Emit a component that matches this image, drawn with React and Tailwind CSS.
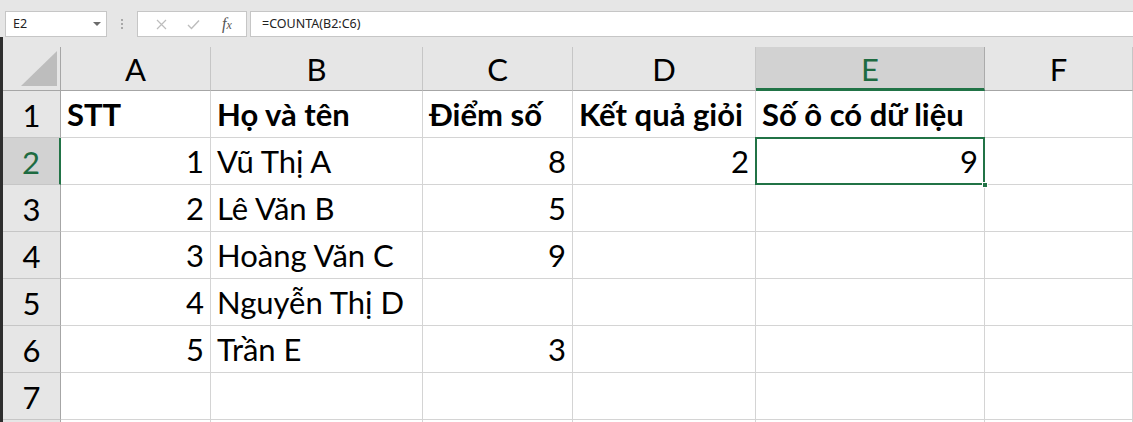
import React from "react";

const COLS = ["A", "B", "C", "D", "E", "F"];

const ROWS = [
  { n: 1, cells: [{ t: "STT", b: true }, { t: "Họ và tên", b: true }, { t: "Điểm số", b: true }, { t: "Kết quả giỏi", b: true }, { t: "Số ô có dữ liệu", b: true }, null] },
  { n: 2, cells: [{ t: "1", r: true }, { t: "Vũ Thị A" }, { t: "8", r: true }, { t: "2", r: true }, { t: "9", r: true }, null] },
  { n: 3, cells: [{ t: "2", r: true }, { t: "Lê Văn B" }, { t: "5", r: true }, null, null, null] },
  { n: 4, cells: [{ t: "3", r: true }, { t: "Hoàng Văn C" }, { t: "9", r: true }, null, null, null] },
  { n: 5, cells: [{ t: "4", r: true }, { t: "Nguyễn Thị D" }, null, null, null, null] },
  { n: 6, cells: [{ t: "5", r: true }, { t: "Trần E" }, { t: "3", r: true }, null, null, null] },
  { n: 7, cells: [null, null, null, null, null, null] },
  { n: 8, cells: [null, null, null, null, null, null] },
];

function FormulaBar() {
  return (
    <div className="h-[37px] flex items-start pt-[11px] font-['Noto_Sans',sans-serif] text-[12.5px] text-[#222]">
      {/* name box */}
      <div className="ml-[5px] w-[102px] h-[26px] bg-white border border-[#c6c6c6] flex items-center pl-[7px] pr-[5px]">
        <span className="flex-1">E2</span>
        <svg width="8" height="5" viewBox="0 0 8 5">
          <path d="M0 0 L8 0 L4 4 Z" fill="#6b6b6b" />
        </svg>
      </div>
      <div className="w-[30px] h-[26px] flex flex-col items-center justify-center gap-[2px]">
        <span className="w-[2px] h-[2px] bg-[#a8a8a8]" />
        <span className="w-[2px] h-[2px] bg-[#a8a8a8]" />
        <span className="w-[2px] h-[2px] bg-[#a8a8a8]" />
      </div>
      {/* buttons */}
      <div className="w-[110px] h-[26px] bg-white border border-[#c6c6c6] flex items-center">
        <div className="w-[40px] flex justify-center pl-[6px]">
          <svg width="11" height="11" viewBox="0 0 11 11">
            <path d="M1 1 L10 10 M10 1 L1 10" stroke="#bdbdbd" strokeWidth="1.2" />
          </svg>
        </div>
        <div className="w-[30px] flex justify-center">
          <svg width="13" height="11" viewBox="0 0 13 11">
            <path d="M1 6 L4.5 9.5 L12 1.5" stroke="#bdbdbd" strokeWidth="1.4" fill="none" />
          </svg>
        </div>
        <div className="w-[38px] flex justify-center font-['Liberation_Serif',serif] italic text-[16px] text-[#555] leading-none">
          f<span className="text-[12px] mt-[3px]">x</span>
        </div>
      </div>
      {/* formula input */}
      <div className="ml-[3px] flex-1 h-[26px] bg-white border border-[#c6c6c6] border-r-0 flex items-center pl-[11px]">
        =COUNTA(B2:C6)
      </div>
    </div>
  );
}

function HeaderRow() {
  return (
    <>
      <div className="h-[44px] bg-[#e6e6e6] border-r border-b border-[#a6a6a6] flex items-end justify-end pr-[3px] pb-[4px]">
        <svg width="36" height="35" viewBox="0 0 36 35">
          <path d="M36 0 L36 35 L0 35 Z" fill="#bdbdbd" />
        </svg>
      </div>
      {COLS.map((c) => {
        const sel = c === "E";
        return (
          <div
            key={c}
            className={
              sel
                ? "h-[44px] bg-[#d2d2d2] text-[#1e6b41] border-r border-[#ababab] border-b-[3px] border-b-[#217346] flex items-center justify-center pt-[3px]"
                : "h-[44px] bg-[#e6e6e6] text-black border-r border-[#c6c6c6] border-b border-b-[#a6a6a6] flex items-center justify-center pt-[1px]"
            }
          >
            {c}
          </div>
        );
      })}
    </>
  );
}

function Cell({ cell, selected }) {
  const base = "h-[47px] border-r border-b border-[#d4d4d4] flex items-end pb-[7px] whitespace-nowrap";
  if (selected) {
    return (
      <div className="relative h-[47px] border-r border-b border-[#d4d4d4]">
        <div className="absolute left-[-1px] top-[-1px] right-[-1px] bottom-[-1px] border-2 border-[#217346] flex items-end justify-end pr-[5px] pb-[6px]">
          {cell.t}
        </div>
        <div className="absolute right-[-4px] bottom-[-4px] w-[6px] h-[6px] bg-[#217346] border border-white" />
      </div>
    );
  }
  if (!cell) return <div className={base} />;
  return (
    <div className={`${base} ${cell.r ? "justify-end pr-[6px]" : "pl-[6px]"} ${cell.b ? "font-bold" : ""}`}>
      {cell.t}
    </div>
  );
}

export default function App() {
  return (
    <div className="w-[1133px] h-[422px] overflow-hidden bg-[#e6e6e6]">
      <FormulaBar />
      <div className="border-l-[3px] border-[#2e2e2e] h-[385px] overflow-hidden">
        <div className="h-[10px]" />
        <div className="grid grid-cols-[58px_150px_212px_150px_183px_229px_148px] bg-white font-['Lato','Noto_Sans',sans-serif] text-[31px] leading-none text-black">
          <HeaderRow />
          {ROWS.map((row) => (
            <React.Fragment key={row.n}>
              <div
                className={
                  row.n === 2
                    ? "h-[47px] bg-[#d2d2d2] text-[#1e6b41] border-r-[2px] border-r-[#217346] border-b border-b-[#c6c6c6] flex items-center justify-center pt-[2px]"
                    : "h-[47px] bg-[#e6e6e6] border-r border-r-[#a6a6a6] border-b border-b-[#c6c6c6] flex items-center justify-center pt-[2px]"
                }
              >
                {row.n < 8 ? row.n : ""}
              </div>
              {row.cells.map((cell, i) => (
                <Cell key={i} cell={cell} selected={row.n === 2 && i === 4} />
              ))}
            </React.Fragment>
          ))}
        </div>
      </div>
    </div>
  );
}
